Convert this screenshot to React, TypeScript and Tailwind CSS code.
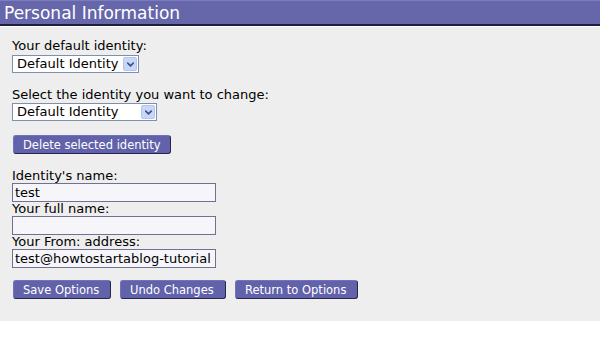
import { ChevronDown } from 'lucide-react';

const font = { fontFamily: '"DejaVu Sans", Verdana, sans-serif' };

function FakeSelect({ value, width }: { value: string; width: string }) {
  return (
    <div className={`relative flex h-[18px] ${width} border border-[#7f8fb0] bg-white`}>
      <select
        defaultValue={value}
        className="h-full w-full appearance-none bg-transparent pl-[4px] text-[13px] leading-[16px] text-black outline-none"
        style={font}
      >
        <option>{value}</option>
      </select>
      <span className="pointer-events-none absolute right-[1px] top-[1px] flex h-[14px] w-[14px] items-center justify-center rounded-[2px] border border-[#b4c6ec] bg-[#c8d7f7]">
        <ChevronDown size={11} strokeWidth={3.5} className="text-[#3d4f86]" />
      </span>
    </div>
  );
}

function Button({ label, width }: { label: string; width: string }) {
  return (
    <button
      className={`h-[19px] ${width} rounded-[3px] border border-[#7272b8] border-b-[#262650] border-r-[#262650] bg-[#6262aa] pl-[9px] text-left text-[11.5px] leading-[16px] text-white`}
      style={font}
    >
      {label}
    </button>
  );
}

function TextField({ value }: { value: string }) {
  return (
    <input
      defaultValue={value}
      className="block h-[19px] w-[204px] border border-[#70708f] bg-[#f5f5fa] px-[2px] text-[13px] leading-[16px] text-black outline-none"
      style={font}
    />
  );
}

export default function App() {
  return (
    <div className="h-[341px] w-[600px] overflow-hidden bg-white text-black" style={font}>
      <div className="h-[321px] bg-[#eeeeee]">
        {/* Titel */}
        <div className="h-[26px] border-t border-t-[#7c7cc0] border-b-2 border-b-[#1d1d3c] bg-[#6666aa] pl-[4px] pt-[1px] text-[17px] leading-[22px] text-white">
          Personal Information
        </div>
        <div className="border-t border-t-white pl-[12px] pt-[12px]">
          <p className="text-[13px] leading-[14px]">Your default identity:</p>
          <div className="mt-[2px]">
            <FakeSelect value="Default Identity" width="w-[127px]" />
          </div>

          <p className="mt-[15px] text-[13px] leading-[14px]">Select the identity you want to change:</p>
          <div className="mt-px">
            <FakeSelect value="Default Identity" width="w-[145px]" />
          </div>

          <div className="ml-px mt-[14px] flex">
            <Button label="Delete selected identity" width="w-[158px]" />
          </div>

          <div className="mt-[15px]">
            <p className="text-[13px] leading-[14px]">Identity&apos;s name:</p>
            <TextField value="test" />
            <p className="text-[13px] leading-[14px]">Your full name:</p>
            <TextField value="" />
            <p className="text-[13px] leading-[14px]">Your From: address:</p>
            <TextField value="test@howtostartablog-tutorial" />
          </div>

          <div className="ml-px mt-[12px] flex gap-[9px]">
            <Button label="Save Options" width="w-[98px]" />
            <Button label="Undo Changes" width="w-[106px]" />
            <Button label="Return to Options" width="w-[123px]" />
          </div>
        </div>
      </div>
    </div>
  );
}
